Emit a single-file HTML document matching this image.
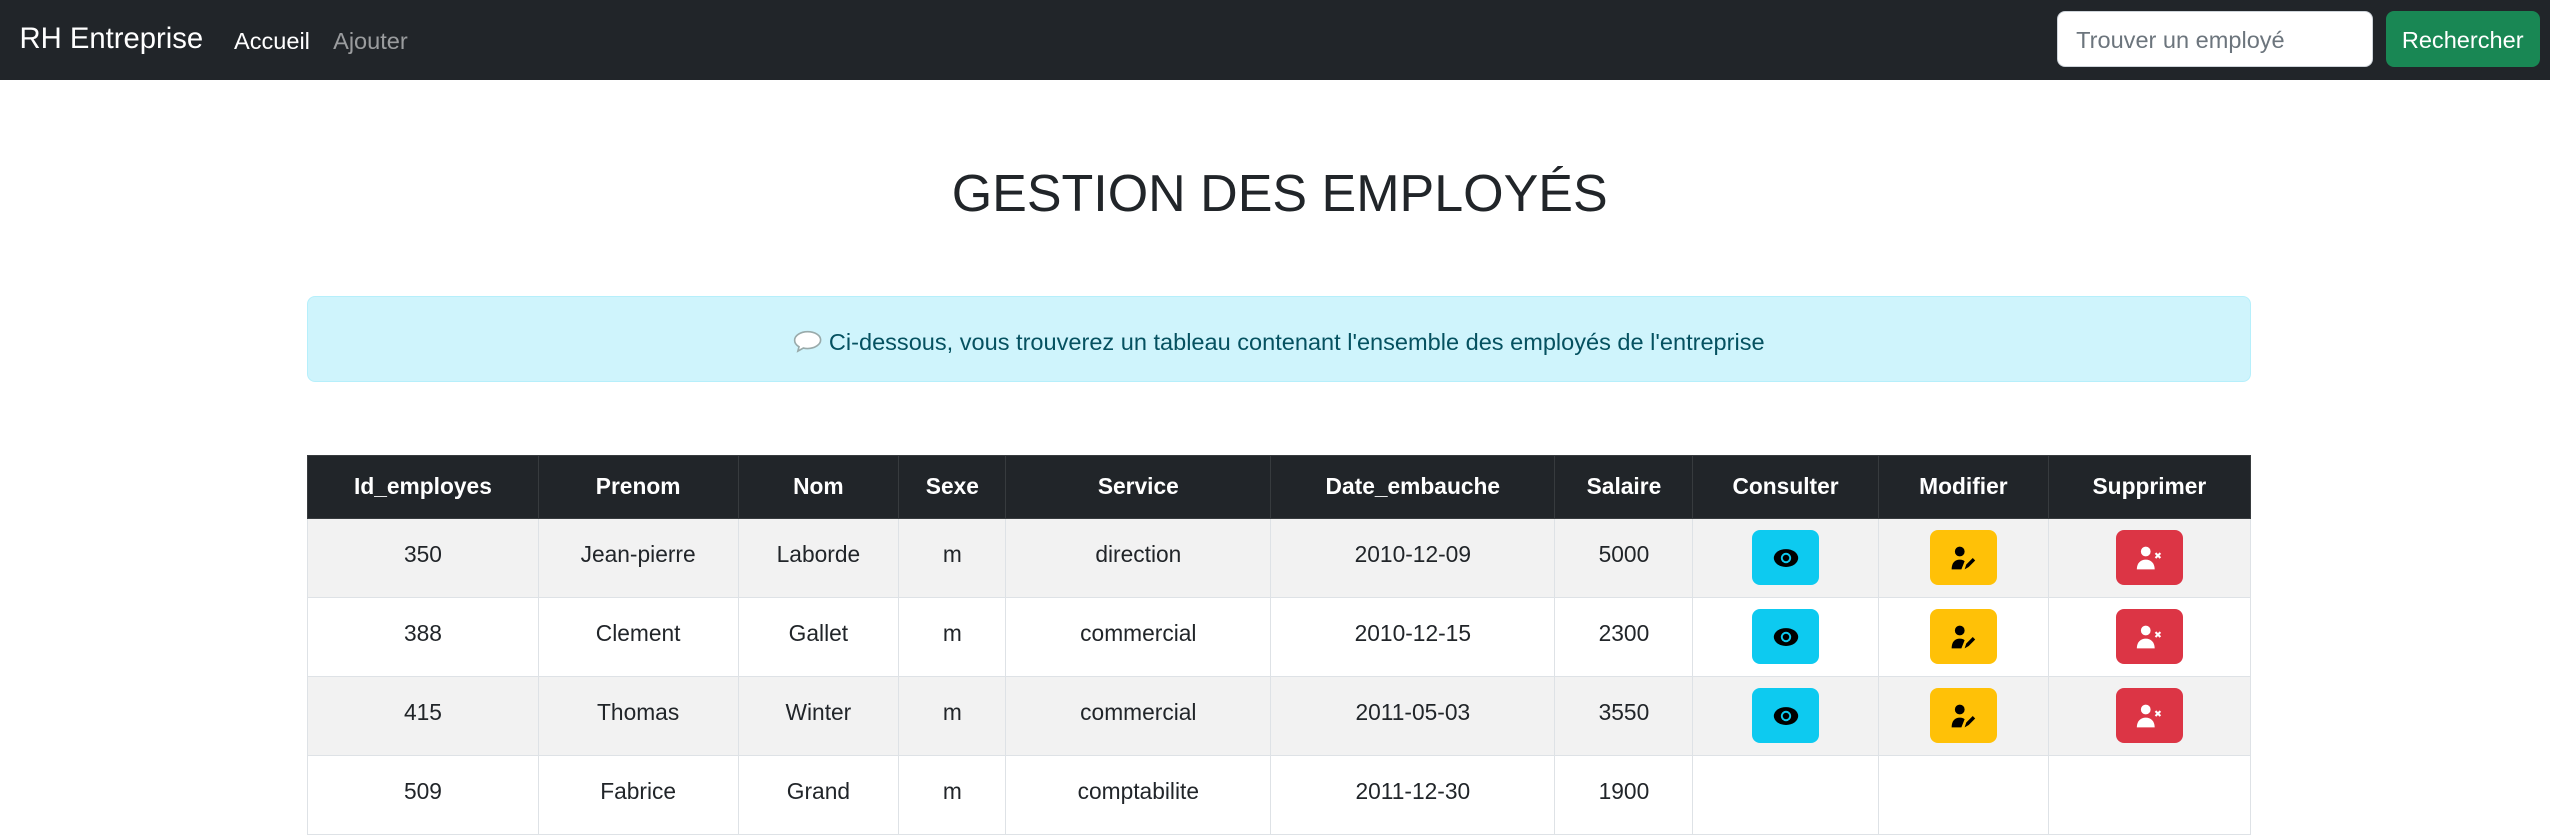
<!DOCTYPE html>
<html><head><meta charset="utf-8">
<style>
html,body{margin:0;padding:0;}
body{width:1569px;height:470px;overflow:hidden;zoom:1.625;font-family:"Liberation Sans",sans-serif;color:#212529;background:#fff;position:relative;}
.nav{position:absolute;left:0;top:0;width:1569px;height:49px;background:#212529;}
.brand{position:absolute;left:12px;top:14px;font-size:18px;color:#fff;}
.l1{position:absolute;left:144px;top:17px;font-size:14.5px;color:#fff;}
.l2{position:absolute;left:205px;top:17px;font-size:14.5px;color:rgba(255,255,255,.55);}
.inp{position:absolute;left:1266px;top:7px;width:194px;height:34px;box-sizing:border-box;background:#fff;border-radius:5px;border:1px solid #ced4da;font-size:14.5px;color:#6c757d;padding:9px 11px;}
.btn{position:absolute;left:1468px;top:7px;width:95px;height:34px;background:#198754;border-radius:5px;color:#fff;font-size:14.5px;text-align:center;line-height:36px;}
h1{position:absolute;left:0;width:1575px;top:101px;margin:0;text-align:center;font-weight:300;font-size:32px;color:#212529;}
.alert{position:absolute;left:189px;top:182px;width:1196px;height:53px;box-sizing:border-box;background:#cff4fc;border:1px solid #b6effb;border-radius:5px;color:#055160;font-size:14.5px;text-align:center;line-height:56px;}
table{position:absolute;left:189px;top:280px;width:1196px;border-collapse:collapse;font-size:14px;}
th{background:#212529;color:#fff;height:38px;font-weight:bold;border:1px solid #373b3e;padding:0;}
td{height:44px;border:1px solid #dee2e6;text-align:center;padding:0 0 4px 0;}
td.c{padding:0;height:48px;}
tr.o td{background:#f2f2f2;}
.b{display:inline-block;width:41px;height:34px;border-radius:5px;vertical-align:middle;}
.b svg{display:block;margin:9px auto 0;}
</style></head><body>
<div class="nav">
<div class="brand">RH Entreprise</div>
<div class="l1">Accueil</div>
<div class="l2">Ajouter</div>
<div class="inp">Trouver un employé</div>
<div class="btn">Rechercher</div>
</div>
<h1>GESTION DES EMPLOYÉS</h1>
<div class="alert"><svg width="18" height="14" viewBox="0 0 18 14" style="vertical-align:-2px;margin-right:4px"><path d="M9 1C4.6 1 1 3.4 1 6.3c0 1.6 1 3 2.7 4L3 13l3.4-1.9c.8.2 1.7.3 2.6.3 4.4 0 8-2.4 8-5.3S13.4 1 9 1z" fill="#fff" stroke="#9aa" stroke-width="1"/></svg>Ci-dessous, vous trouverez un tableau contenant l'ensemble des employés de l'entreprise</div>
<table>
<colgroup><col style="width:142px"><col style="width:123px"><col style="width:99px"><col style="width:66px"><col style="width:163px"><col style="width:175px"><col style="width:85px"><col style="width:114px"><col style="width:105px"><col style="width:124px"></colgroup>
<tr><th>Id_employes</th><th>Prenom</th><th>Nom</th><th>Sexe</th><th>Service</th><th>Date_embauche</th><th>Salaire</th><th>Consulter</th><th>Modifier</th><th>Supprimer</th></tr>
<tr class="o"><td>350</td><td>Jean-pierre</td><td>Laborde</td><td>m</td><td>direction</td><td>2010-12-09</td><td>5000</td><td class="c"><span class="b" style="background:#0dcaf0"><svg width="16" height="16" viewBox="0 0 16 16"><ellipse cx="8" cy="8" rx="7.5" ry="5.5" fill="#000"/><circle cx="8" cy="8" r="3.2" fill="#0dcaf0"/><circle cx="8" cy="8" r="2" fill="#000"/></svg></span></td><td class="c"><span class="b" style="background:#ffc107"><svg width="16" height="16" viewBox="0 0 16 16"><circle cx="6" cy="4" r="3" fill="#000"/><path d="M1 15c0-4 2-6 5-6 1.5 0 2.5.4 3 1L7 15z" fill="#000"/><path d="M9 15l1-3 4-4 1.5 1.5-4 4z" fill="#000"/></svg></span></td><td class="c"><span class="b" style="background:#dc3545"><svg width="16" height="16" viewBox="0 0 16 16"><circle cx="6" cy="4" r="3" fill="#fff"/><path d="M0.5 15c0-4 2.5-6 5.5-6s5.5 2 5.5 6z" fill="#fff"/><path d="M12 5l3 3M15 5l-3 3" stroke="#fff" stroke-width="1.3"/></svg></span></td></tr>
<tr><td>388</td><td>Clement</td><td>Gallet</td><td>m</td><td>commercial</td><td>2010-12-15</td><td>2300</td><td class="c"><span class="b" style="background:#0dcaf0"><svg width="16" height="16" viewBox="0 0 16 16"><ellipse cx="8" cy="8" rx="7.5" ry="5.5" fill="#000"/><circle cx="8" cy="8" r="3.2" fill="#0dcaf0"/><circle cx="8" cy="8" r="2" fill="#000"/></svg></span></td><td class="c"><span class="b" style="background:#ffc107"><svg width="16" height="16" viewBox="0 0 16 16"><circle cx="6" cy="4" r="3" fill="#000"/><path d="M1 15c0-4 2-6 5-6 1.5 0 2.5.4 3 1L7 15z" fill="#000"/><path d="M9 15l1-3 4-4 1.5 1.5-4 4z" fill="#000"/></svg></span></td><td class="c"><span class="b" style="background:#dc3545"><svg width="16" height="16" viewBox="0 0 16 16"><circle cx="6" cy="4" r="3" fill="#fff"/><path d="M0.5 15c0-4 2.5-6 5.5-6s5.5 2 5.5 6z" fill="#fff"/><path d="M12 5l3 3M15 5l-3 3" stroke="#fff" stroke-width="1.3"/></svg></span></td></tr>
<tr class="o"><td>415</td><td>Thomas</td><td>Winter</td><td>m</td><td>commercial</td><td>2011-05-03</td><td>3550</td><td class="c"><span class="b" style="background:#0dcaf0"><svg width="16" height="16" viewBox="0 0 16 16"><ellipse cx="8" cy="8" rx="7.5" ry="5.5" fill="#000"/><circle cx="8" cy="8" r="3.2" fill="#0dcaf0"/><circle cx="8" cy="8" r="2" fill="#000"/></svg></span></td><td class="c"><span class="b" style="background:#ffc107"><svg width="16" height="16" viewBox="0 0 16 16"><circle cx="6" cy="4" r="3" fill="#000"/><path d="M1 15c0-4 2-6 5-6 1.5 0 2.5.4 3 1L7 15z" fill="#000"/><path d="M9 15l1-3 4-4 1.5 1.5-4 4z" fill="#000"/></svg></span></td><td class="c"><span class="b" style="background:#dc3545"><svg width="16" height="16" viewBox="0 0 16 16"><circle cx="6" cy="4" r="3" fill="#fff"/><path d="M0.5 15c0-4 2.5-6 5.5-6s5.5 2 5.5 6z" fill="#fff"/><path d="M12 5l3 3M15 5l-3 3" stroke="#fff" stroke-width="1.3"/></svg></span></td></tr>
<tr><td>509</td><td>Fabrice</td><td>Grand</td><td>m</td><td>comptabilite</td><td>2011-12-30</td><td>1900</td><td class="c"></td><td class="c"></td><td class="c"></td></tr>
</table>
</body></html>
